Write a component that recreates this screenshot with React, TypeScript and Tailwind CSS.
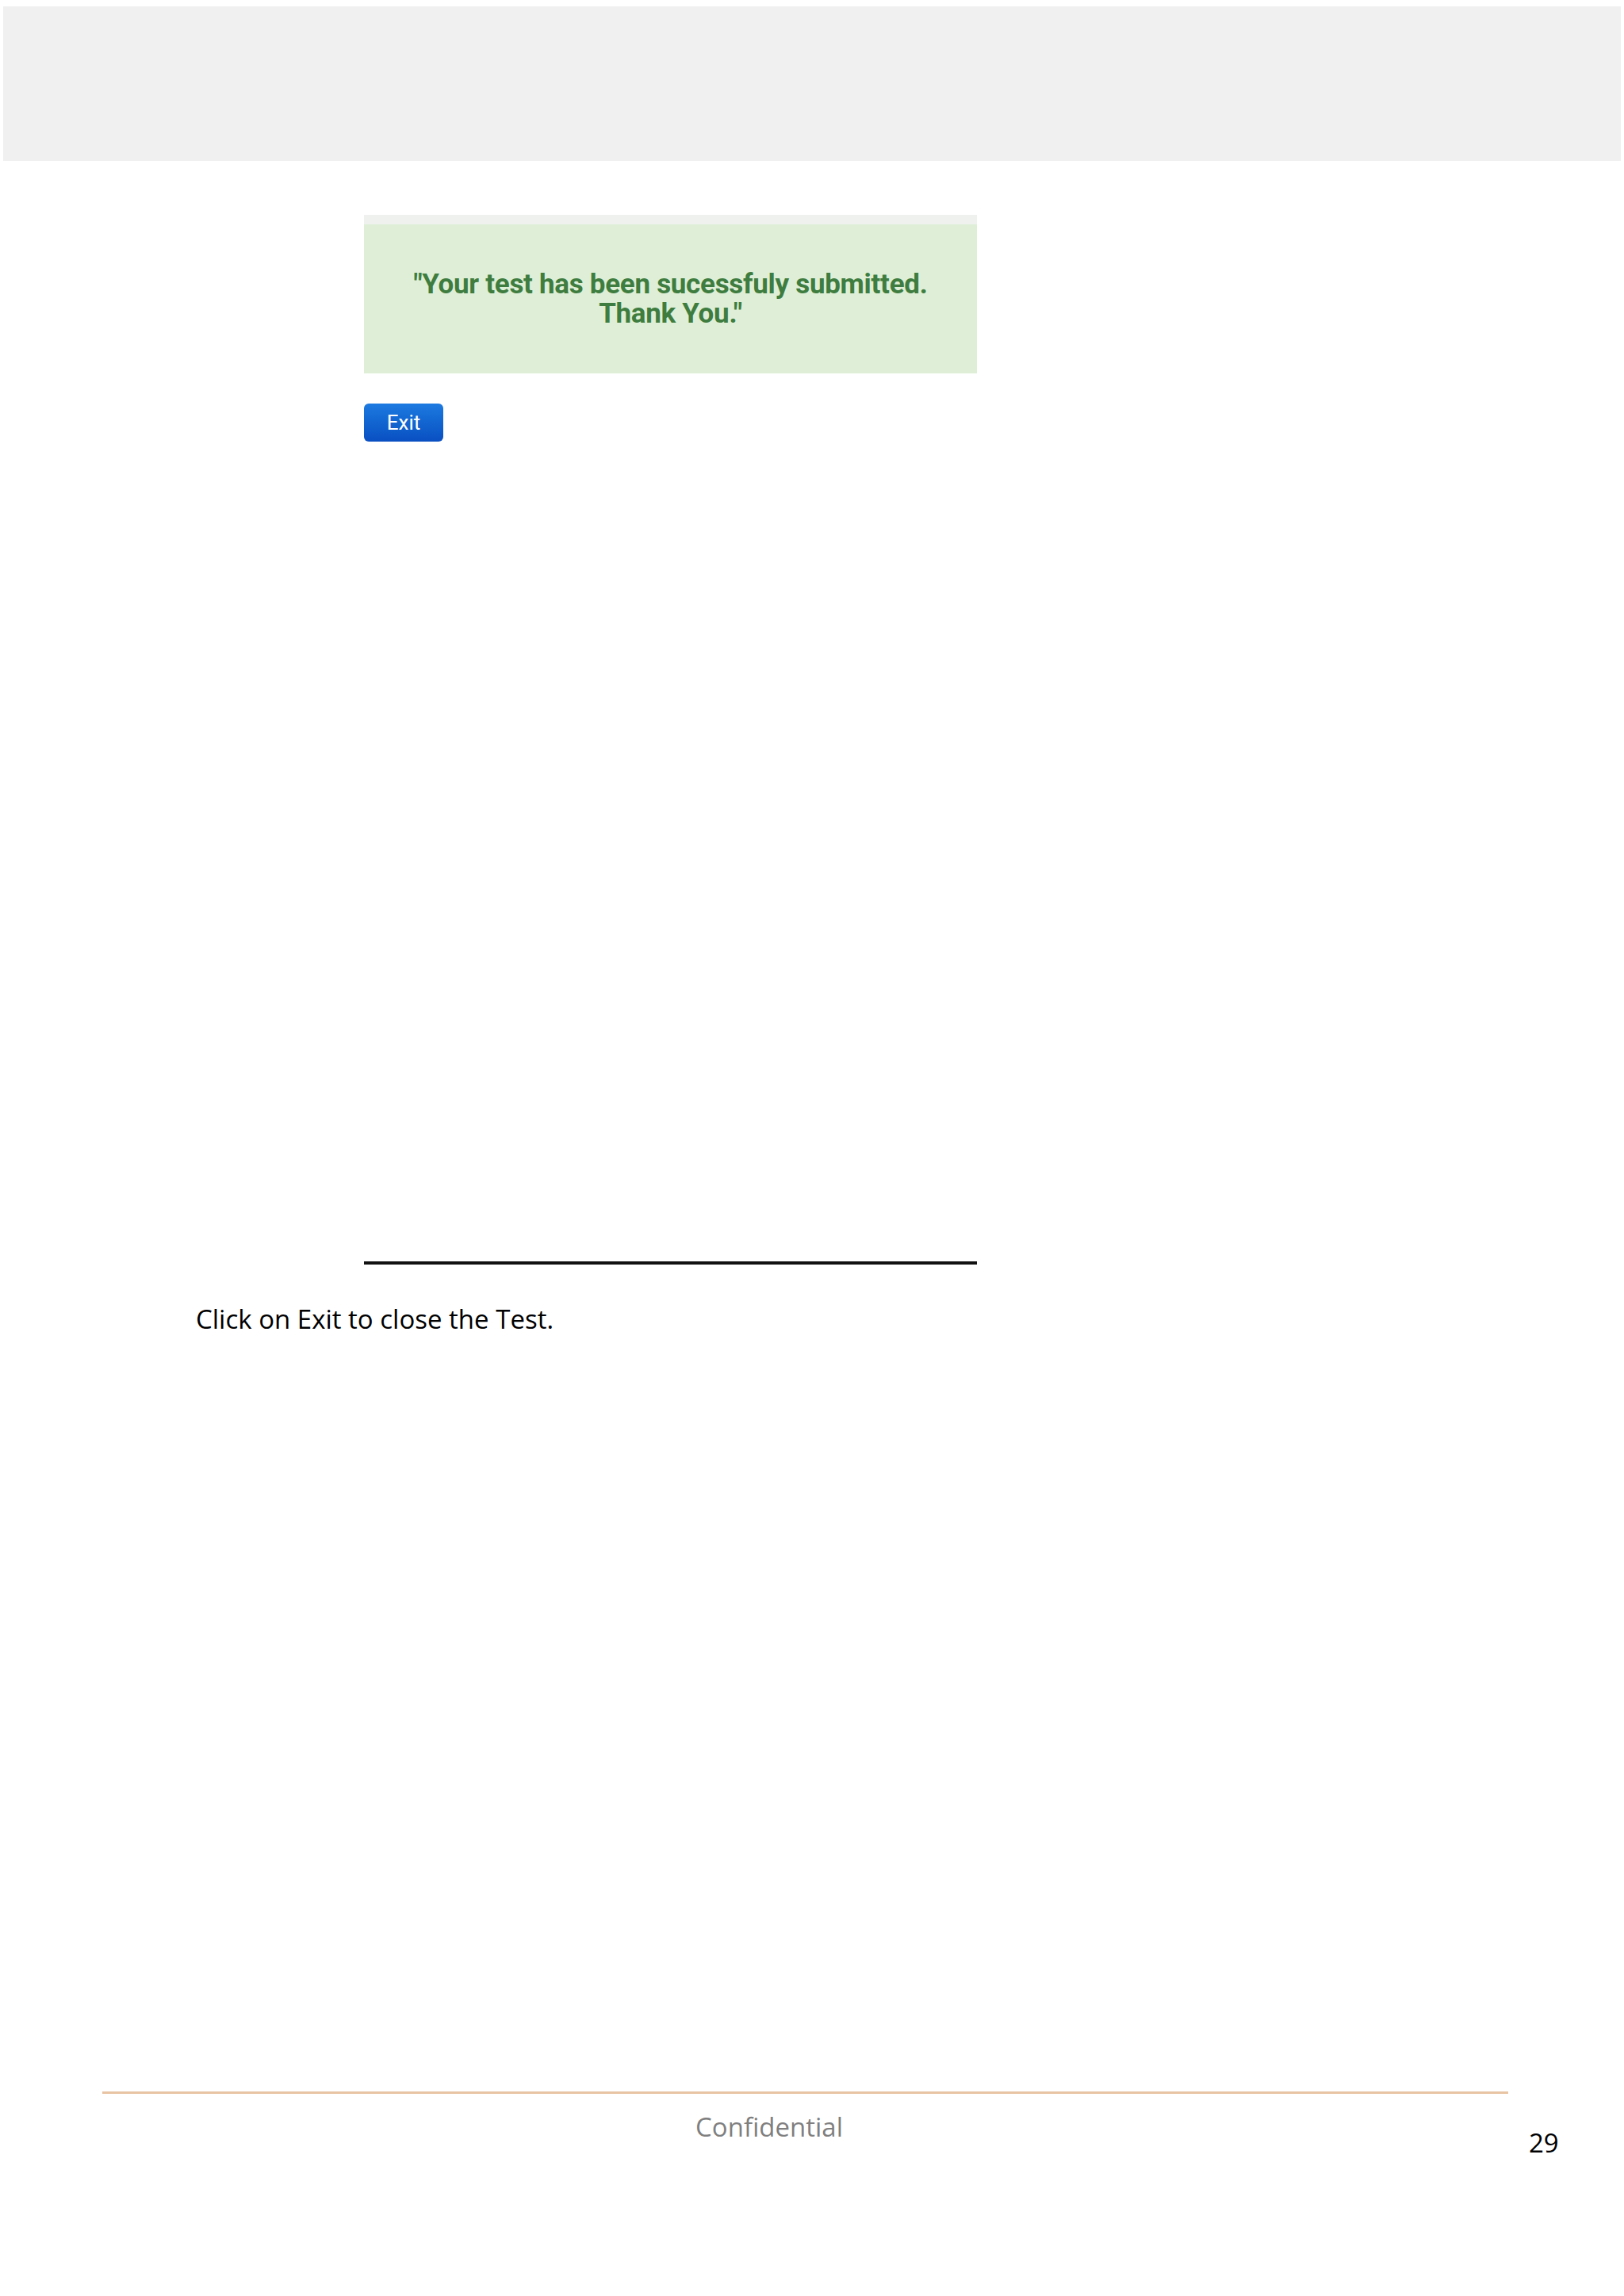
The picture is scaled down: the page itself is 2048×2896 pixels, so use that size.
export default function App() {
  return (
    <div className="w-[2048px] h-[2896px] bg-white flex flex-col">
      {/* Top grey band */}
      <div className="mt-[8px] mx-[4px] h-[195px] bg-[#f0f0f0]" />

      {/* Screenshot area */}
      <div className="ml-[459px] w-[773px] flex flex-col">
        <div className="mt-[68px] h-[12px] bg-[#eef1ee]" />
        <div className="h-[188px] bg-[#dfefd7] flex flex-col items-center justify-center">
          <p
            className="text-[35px] leading-[37px] font-bold text-[#3e7d3f] text-center tracking-[-0.3px]"
            style={{ fontFamily: "Roboto, 'Noto Sans', sans-serif" }}
          >
            "Your test has been sucessfuly submitted.
            <br />
            Thank You."
          </p>
        </div>
        <button
          className="mt-[38px] w-[100px] h-[48px] rounded-[6px] bg-gradient-to-b from-[#1d7ae0] to-[#0a4fc2] text-white text-[26px] leading-none"
          style={{ fontFamily: "Roboto, 'Noto Sans', sans-serif" }}
        >
          Exit
        </button>
        <div className="mt-[1034px] h-[4px] bg-[#111]" />
      </div>

      <p
        className="ml-[247px] mt-[49px] text-[33px] leading-[40px] text-black"
        style={{ fontFamily: "'Open Sans', 'Liberation Sans', sans-serif" }}
      >
        Click on Exit to close the Test.
      </p>

      {/* Footer */}
      <div className="mt-auto mb-[175px] flex flex-col">
        <div className="ml-[129px] w-[1773px] h-[3px] bg-[#e8c4a4]" />
        <div className="relative h-[80px]">
          <p
            className="absolute left-[877px] top-[22px] text-[33px] leading-[40px] text-[#7f7f7f]"
            style={{ fontFamily: "'Open Sans', 'Liberation Sans', sans-serif" }}
          >
            Confidential
          </p>
          <p
            className="absolute left-[1928px] top-[42px] text-[33px] leading-[40px] text-black"
            style={{ fontFamily: "'Open Sans', 'Liberation Sans', sans-serif" }}
          >
            29
          </p>
        </div>
      </div>
    </div>
  );
}
